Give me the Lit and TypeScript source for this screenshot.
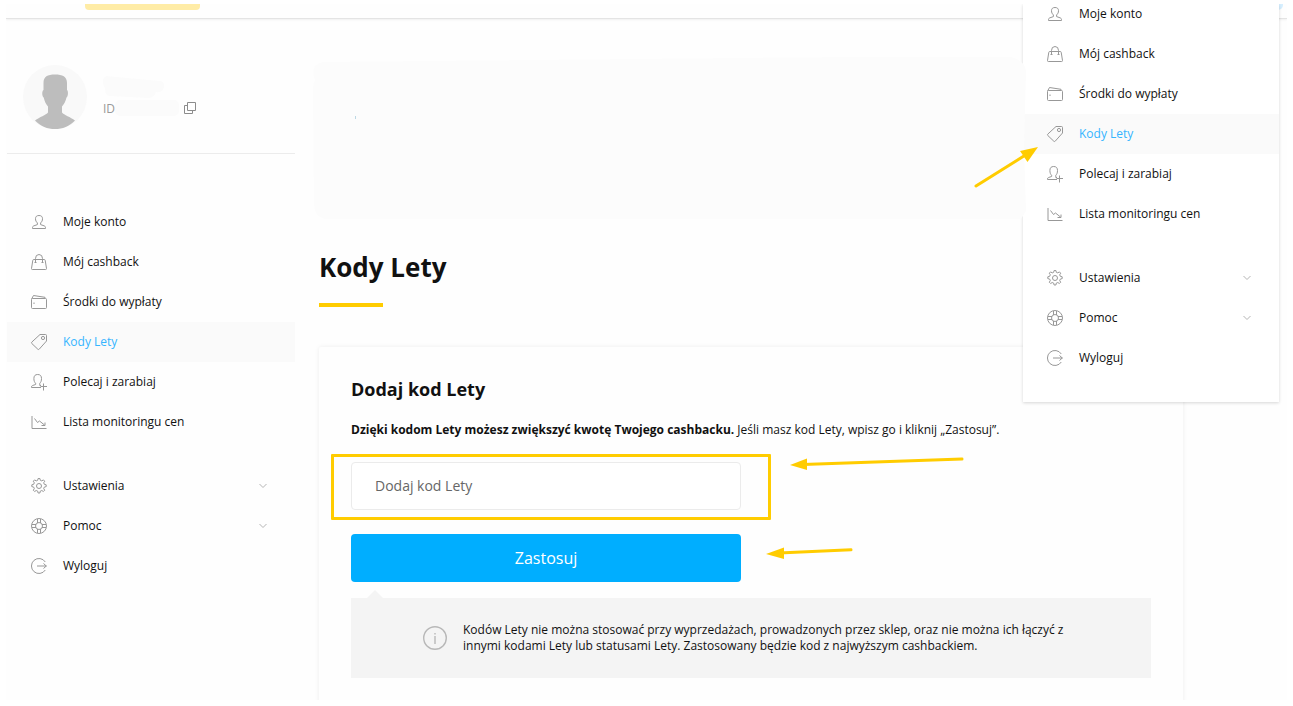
import { LitElement, html, css, svg, nothing } from "lit";
import { customElement, property } from "lit/decorators.js";
import { classMap } from "lit/directives/class-map.js";

interface MenuEntry {
  icon: string;
  label: string;
  active?: boolean;
  expandable?: boolean;
}

const PRIMARY: MenuEntry[] = [
  { icon: "user", label: "Moje konto" },
  { icon: "bag", label: "Mój cashback" },
  { icon: "wallet", label: "Środki do wypłaty" },
  { icon: "tag", label: "Kody Lety", active: true },
  { icon: "invite", label: "Polecaj i zarabiaj" },
  { icon: "chart", label: "Lista monitoringu cen" },
];

const SECONDARY: MenuEntry[] = [
  { icon: "gear", label: "Ustawienia", expandable: true },
  { icon: "help", label: "Pomoc", expandable: true },
  { icon: "logout", label: "Wyloguj" },
];

const ICONS: Record<string, unknown> = {
  user: svg`<path d="M6.4 8.9C5.2 7.900 4.500 6.600 4.500 4.700 4.500 2.600 5.700 1.500 8 1.500s3.500 1.100 3.500 3.200c0 1.900-.7 3.200-1.900 4.200v1.700l3.700 1.300c.8.300 1.200.9 1.200 1.700v.9h-13v-.9c0-.8.4-1.400 1.200-1.700l3.700-1.300z"/>`,
  bag: svg`<path d="M2.800 5.500h10.400c.6 0 .9.300 1 .8l1.300 8.200c.1.600-.2 1-.8 1H1.300c-.6 0-.9-.4-.8-1l1.300-8.200c.1-.5.4-.8 1-.8z"/><path d="M4.500 8.500v-4a3.500 4 0 0 1 7 0v4"/><path d="M3.500 8.500h2M10.500 8.500h2"/>`,
  wallet: svg`<path d="M.5 5.500a1 1 0 0 1 1-1h13a1 1 0 0 1 1 1v8a1 1 0 0 1-1 1h-13a1 1 0 0 1-1-1z"/><path d="M.7 4.900 2.500 1.500l11.500 1.800v1"/><path d="M3 8.500v1.500"/>`,
  tag: svg`<path d="M9 .5h5.500a1 1 0 0 1 1 1V7L8.200 15.200a1 1 0 0 1-1.400 0L.8 9.500a1 1 0 0 1 0-1.400z"/><circle cx="12" cy="4" r="1.600"/>`,
  invite: svg`<path d="M10 11.500H8.800V9.200C9.900 8.300 10.500 6.800 10.500 4.500 10.500 1.900 9.300.5 6.700.5S2.900 1.900 2.900 4.500c0 2.300.6 3.800 1.700 4.700v1.300L1.500 11.500C.8 11.800.5 12.300.5 13v.5h9.500"/><path d="M12.500 9.500v7M9.500 12.500h6.500"/>`,
  chart: svg`<path d="M1 2v12.500h14.500"/><path d="M3.500 4.500l3 4 2-1.500 5 4"/><path d="M14 8.500v3h-3.500"/>`,
  gear: svg`<path d="M6.700 2.300 7.100.5h1.800l.4 1.800 1.500.6 1.600-1 1.300 1.300-1 1.600.6 1.500 1.900.5v1.800l-1.900.5-.6 1.500 1 1.600-1.300 1.300-1.600-1-1.500.6-.4 1.900H7.100l-.4-1.900-1.500-.6-1.600 1-1.300-1.300 1-1.600-.6-1.500-1.900-.5V6.800l1.900-.5.6-1.500-1-1.600 1.300-1.300 1.600 1z"/><circle cx="8" cy="8" r="2.500"/>`,
  help: svg`<circle cx="8" cy="8" r="7.500"/><circle cx="8" cy="8" r="3.500"/><path d="M6.500 1v4M9.500 1v4M6.500 11v4M9.500 11v4M1 6.500h4M1 9.500h4M11 6.500h4M11 9.500h4"/>`,
  logout: svg`<path d="M14.300 4A7.500 7.500 0 1 0 14.300 12"/><path d="M6 8h9.500M12.500 5.500 15.300 8l-2.800 2.500"/>`,
};

@customElement("account-menu")
export class AccountMenu extends LitElement {
  @property() label = "";

  static styles = css`
    :host {
      display: block;
    }
    ul {
      list-style: none;
      margin: 0;
      padding: 0;
    }
    ul + ul {
      margin-top: 24px;
    }
    .link {
      display: flex;
      align-items: center;
      gap: 16px;
      height: 40px;
      padding: 0 28px 0 24px;
      color: #111;
      font-size: 12px;
      line-height: 16px;
      text-decoration: none;
    }
    .link.active {
      background: #fafafa;
      color: #35b5ff;
    }
    .icon {
      flex: none;
      width: 16px;
      height: 16px;
      overflow: visible;
      fill: none;
      stroke: #989898;
      stroke-width: 1;
    }
    .text {
      flex: 1;
    }
    .chevron {
      width: 8px;
      height: 6px;
      fill: none;
      stroke: #b4b4b4;
    }
  `;

  private renderEntry(entry: MenuEntry) {
    return html`<li>
      <a
        href="#"
        class=${classMap({ link: true, active: !!entry.active })}
        aria-current=${entry.active ? "page" : nothing}
      >
        <svg class="icon" viewBox="0 0 16 16" aria-hidden="true">${ICONS[entry.icon]}</svg>
        <span class="text">${entry.label}</span>
        ${entry.expandable
          ? html`<svg class="chevron" viewBox="0 0 8 6" aria-hidden="true">
              <path d="M.5 1 4 4.500 7.500 1" />
            </svg>`
          : nothing}
      </a>
    </li>`;
  }

  render() {
    return html`<nav aria-label=${this.label}>
      <ul>${PRIMARY.map((e) => this.renderEntry(e))}</ul>
      <ul>${SECONDARY.map((e) => this.renderEntry(e))}</ul>
    </nav>`;
  }
}

@customElement("app-root")
export class AppRoot extends LitElement {
  static styles = css`
    :host {
      display: block;
      font-family: "Open Sans", "Noto Sans", sans-serif;
      color: #111;
    }
    * {
      box-sizing: border-box;
    }
    .page {
      padding: 4px 6px 6px;
      background: #fff;
    }
    .shell {
      position: relative;
      display: flex;
      flex-direction: column;
      min-height: calc(100vh - 10px);
      overflow: hidden;
      background: #fefefe;
    }
    .topbar {
      display: flex;
      justify-content: space-between;
      height: 15px;
      padding: 0 4px 0 79px;
      border-bottom: 1px solid #e4e4e4;
      box-shadow: 0 1px 2px rgba(0, 0, 0, 0.06);
    }
    .tab {
      width: 115px;
      height: 6px;
      border-radius: 0 0 4px 4px;
      background: #ffeca6;
    }
    .badge {
      width: 24px;
      height: 6px;
      border-radius: 0 0 5px 5px;
      background: #d6efff;
    }
    .content {
      flex: 1;
      display: grid;
      grid-template-columns: 288px minmax(0, 864px);
      column-gap: 24px;
      padding-left: 1px;
    }
    .profile {
      display: flex;
      gap: 16px;
      margin-bottom: 48px;
      padding: 46px 16px 24px;
      border-bottom: 1px solid #ececec;
    }
    .avatar {
      flex: none;
      width: 64px;
      height: 64px;
    }
    .identity {
      display: flex;
      flex-direction: column;
      gap: 2px;
      padding-top: 11px;
    }
    .name {
      width: 64px;
      height: 22px;
      fill: #fbfbfb;
    }
    .id-row {
      display: flex;
      align-items: center;
      height: 16px;
      color: #999;
      font-size: 12px;
    }
    .id-value {
      width: 64px;
      height: 16px;
      margin-right: 5px;
      border-radius: 5px;
      background: #fbfbfb;
    }
    .copy {
      display: flex;
      padding: 0;
      border: 0;
      background: none;
    }
    .copy svg {
      width: 12px;
      height: 12px;
      fill: #fff;
      stroke: #8c8c8c;
    }
    main {
      display: flex;
      flex-direction: column;
    }
    .banner {
      position: relative;
      z-index: 2;
      width: 712px;
      height: 162px;
      margin: 38px 0 30px -6px;
      overflow: visible;
      fill: #fcfcfc;
    }
    h1 {
      margin: 0;
      font-size: 26px;
      line-height: 36px;
      font-weight: 700;
    }
    .rule {
      width: 64px;
      height: 4px;
      margin: 18px 0 40px;
      background: #fc0;
    }
    .card {
      flex: 1;
      margin-bottom: -8px;
      padding: 30px 32px;
      border-radius: 2px;
      background: #fefefe;
      box-shadow: 0 0 5px rgba(0, 0, 0, 0.07);
    }
    h2 {
      margin: 0 0 20px;
      font-size: 18px;
      line-height: 25px;
      font-weight: 700;
    }
    .lead {
      margin: 0 0 24px;
      font-size: 12px;
      line-height: 16px;
    }
    form {
      display: grid;
      gap: 24px;
      max-width: 390px;
      margin-bottom: 16px;
    }
    .field {
      position: relative;
      display: grid;
    }
    .code {
      width: 100%;
      height: 48px;
      padding: 0 23px 2px;
      border: 1px solid #ebebeb;
      border-radius: 4px;
      background: #fff;
      color: #111;
      font: 14px/20px "Open Sans", "Noto Sans", sans-serif;
    }
    .code::placeholder {
      color: #666;
      opacity: 1;
    }
    .submit {
      width: 100%;
      height: 48px;
      border: 0;
      border-radius: 4px;
      background: #00aeff;
      color: #fff;
      font: 16px/24px "Open Sans", "Noto Sans", sans-serif;
    }
    .frame {
      position: absolute;
      inset: -8px -30px -10px -20px;
      border: 3px solid #fc0;
      border-radius: 1px;
      pointer-events: none;
    }
    .arrow {
      position: absolute;
      overflow: visible;
      fill: #fc0;
      stroke: #fc0;
      pointer-events: none;
    }
    .arrow line {
      stroke-width: 3;
      stroke-linecap: round;
    }
    .arrow path {
      stroke: none;
    }
    .arrow-field {
      left: 440px;
      top: -4px;
      width: 172px;
      height: 14px;
    }
    .arrow-submit {
      left: 416px;
      top: 14px;
      width: 86px;
      height: 12px;
    }
    .arrow-menu {
      right: 249px;
      top: 143px;
      width: 63px;
      height: 40px;
      z-index: 4;
    }
    .note {
      position: relative;
      display: flex;
      align-items: center;
      gap: 16px;
      min-height: 80px;
      padding: 8px 72px;
      background: #f4f4f4;
      font-size: 12px;
      line-height: 16px;
    }
    .note::before {
      content: "";
      position: absolute;
      left: 16px;
      bottom: 100%;
      border: 8px solid transparent;
      border-top: 0;
      border-bottom-color: #f4f4f4;
    }
    .note p {
      margin: 0;
    }
    .info {
      flex: none;
      width: 24px;
      height: 24px;
      fill: none;
      stroke: #b8b8b8;
    }
    .dropdown {
      position: absolute;
      top: 0;
      right: 8px;
      z-index: 1;
      width: 256px;
      padding-bottom: 24px;
      overflow: hidden;
      background: #fff;
      box-shadow: 0 1px 3px rgba(0, 0, 0, 0.16);
    }
    .dropdown account-menu {
      margin-top: -10px;
    }
  `;

  render() {
    return html`<div class="page">
      <div class="shell">
        <header class="topbar">
          <span class="tab"></span>
          <span class="badge"></span>
        </header>
        <div class="content">
          <aside>
            <div class="profile">
              <svg class="avatar" viewBox="0 0 64 64" aria-hidden="true">
                <circle cx="32" cy="32" r="32" fill="#f9f9f9" />
                <path
                  fill="#bdbdbd"
                  d="M20.500 25V18C20.500 11.500 24.500 9.500 32 9.500S44 11.500 44 18v7c1.500 1 1.200 6.500-.5 7.500-.8 3.500-2.300 6.500-4.500 9v6c2 2.500 8.500 4.500 13 8C46.500 61.500 39.500 64 32 64S17.500 61.500 12 55.500c4.500-3.500 11-5.500 13-8v-6c-2.200-2.500-3.500-5.500-4.300-9-1.700-1-2-6.500-.2-7.500z"
                />
              </svg>
              <div class="identity">
                <svg class="name" viewBox="0 0 64 22" aria-hidden="true">
                  <path d="M3 0 56 5Q62 5 61 11T53 16Q51 22 45 22L7 20Q2 20 2 12-3 4 3 0z" />
                </svg>
                <div class="id-row">
                  <span>ID</span>
                  <span class="id-value"></span>
                  <button class="copy" type="button" aria-label="ID">
                    <svg viewBox="0 0 12 12" aria-hidden="true">
                      <path d="M.5 3.500h8v8h-8z" />
                      <path d="M3.500.5h8v8h-8z" />
                    </svg>
                  </button>
                </div>
              </div>
            </div>
            <account-menu label="Konto"></account-menu>
          </aside>
          <main>
            <svg class="banner" viewBox="0 0 712 162" aria-hidden="true">
              <path
                d="M10 5 540 0 698 0Q712 4 713 14L711 90 713 154 708 162H12Q2 160 1 148L0 35Q0 26 2 23-4 8 10 5z"
              />
              <rect x="42" y="59" width="1" height="3" fill="#bcd8e4" />
            </svg>
            <h1>Kody Lety</h1>
            <div class="rule"></div>
            <section class="card">
              <h2><label for="code">Dodaj kod Lety</label></h2>
              <p class="lead">
                <b>Dzięki kodom Lety możesz zwiększyć kwotę Twojego cashbacku.</b> Jeśli masz kod
                Lety, wpisz go i kliknij „Zastosuj”.
              </p>
              <form @submit=${(e: Event) => e.preventDefault()}>
                <div class="field">
                  <input class="code" id="code" type="text" placeholder="Dodaj kod Lety" />
                  <span class="frame"></span>
                  <svg class="arrow arrow-field" viewBox="0 0 172 14" aria-hidden="true">
                    <line x1="12" y1="6.500" x2="171" y2="1" />
                    <path d="M-1 7 16 0.500v11.500z" />
                  </svg>
                </div>
                <div class="field">
                  <button class="submit" type="submit">Zastosuj</button>
                  <svg class="arrow arrow-submit" viewBox="0 0 86 12" aria-hidden="true">
                    <line x1="12" y1="5" x2="84" y2="1.800" />
                    <path d="M-1 6 17-.5v11.500z" />
                  </svg>
                </div>
              </form>
              <div class="note">
                <svg class="info" viewBox="0 0 24 24" aria-hidden="true">
                  <circle cx="12" cy="12" r="11.300" stroke-width="1.400" />
                  <path d="M12 10v8M12 7v1.500" stroke-width="1.400" />
                </svg>
                <p>
                  Kodów Lety nie można stosować przy wyprzedażach, prowadzonych przez sklep, oraz nie
                  można ich łączyć z innymi kodami Lety lub statusami Lety. Zastosowany będzie kod z
                  najwyższym cashbackiem.
                </p>
              </div>
            </section>
          </main>
        </div>
        <div class="dropdown"><account-menu label="Menu"></account-menu></div>
        <svg class="arrow arrow-menu" viewBox="0 0 63 40" aria-hidden="true">
          <line x1="1" y1="39" x2="52" y2="7" />
          <path d="M63 0 45 4l7.500 11z" />
        </svg>
      </div>
    </div>`;
  }
}
